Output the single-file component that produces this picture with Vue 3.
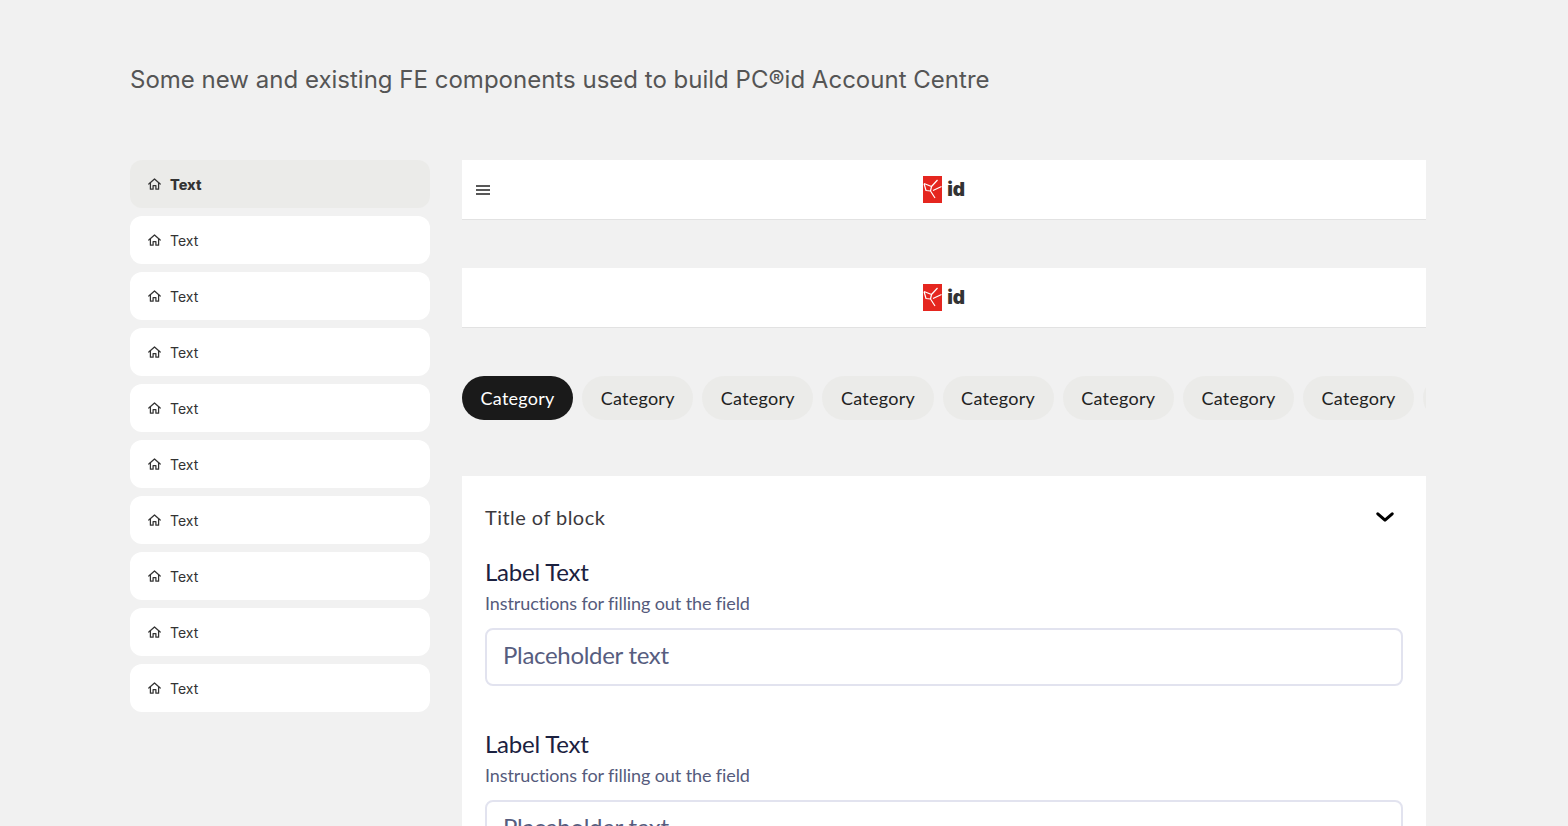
<script setup>
const navItems = Array.from({ length: 10 }, (_, i) => ({ id: i, label: 'Text', active: i === 0 }))
const chips = Array.from({ length: 9 }, (_, i) => ({ id: i, label: 'Category', active: i === 0 }))
const fields = [0, 1]
</script>

<template>
  <main class="page">
    <h1 class="intro">Some new and existing FE components used to build PC®id Account Centre</h1>
    <div class="columns">
      <nav class="side">
        <a v-for="item in navItems" :key="item.id" class="nav-item" :class="{ active: item.active }">
          <svg class="home" viewBox="0 0 13 12" width="13" height="12" fill="none" stroke="currentColor" stroke-width="1.25" stroke-linejoin="round" stroke-linecap="round">
            <path d="M0.8 6 6.5 1 12.2 6" />
            <path d="M2.4 4.8v6.4h2.7V7.6h2.8v3.6h2.7V4.8" />
          </svg>
          <span>{{ item.label }}</span>
        </a>
      </nav>
      <section class="content">
        <header class="topbar">
          <svg class="burger" viewBox="0 0 14 10" width="14" height="10" fill="none" stroke="#222" stroke-width="1.3">
            <path d="M0 1h14M0 5h14M0 9h14" />
          </svg>
          <div class="logo">
            <svg viewBox="0 0 19 27" width="19" height="27">
              <rect width="19" height="27" fill="#e5261f" />
              <path d="M1 7.5 8.5 10.5 14.5 4M8.5 10.5 7.5 15 12 22M7.5 15 3 14.5 1 7.5M10 14.5 18.5 10.5" fill="none" stroke="#fff" stroke-width="1.2" stroke-linejoin="round" />
            </svg>
            <span>id</span>
          </div>
        </header>
        <header class="topbar">
          <div class="logo">
            <svg viewBox="0 0 19 27" width="19" height="27">
              <rect width="19" height="27" fill="#e5261f" />
              <path d="M1 7.5 8.5 10.5 14.5 4M8.5 10.5 7.5 15 12 22M7.5 15 3 14.5 1 7.5M10 14.5 18.5 10.5" fill="none" stroke="#fff" stroke-width="1.2" stroke-linejoin="round" />
            </svg>
            <span>id</span>
          </div>
        </header>
        <div class="chips">
          <button v-for="chip in chips" :key="chip.id" class="chip" :class="{ active: chip.active }">{{ chip.label }}</button>
        </div>
        <article class="block">
          <div class="block-head">
            <h2>Title of block</h2>
            <svg viewBox="0 0 18 10" width="18" height="10" fill="none" stroke="#000" stroke-width="3" stroke-linecap="round" stroke-linejoin="round">
              <path d="M1.8 1.8 9 8.2l7.2-6.4" />
            </svg>
          </div>
          <div v-for="f in fields" :key="f" class="field">
            <label>Label Text</label>
            <p>Instructions for filling out the field</p>
            <div class="input">Placeholder text</div>
          </div>
        </article>
      </section>
    </div>
  </main>
</template>

<style scoped>
.page {
  height: 826px;
  overflow: hidden;
  box-sizing: border-box;
  padding: 64px 142px 0 130px;
  background: #f1f1f1;
  font-family: Inter, "Liberation Sans", sans-serif;
}
.intro {
  margin: 0 0 64px;
  font-size: 24px;
  line-height: 32px;
  font-weight: 400;
  letter-spacing: 0.01px;
  color: #555;
}
.columns {
  display: flex;
  gap: 32px;
  align-items: flex-start;
}
.side {
  width: 300px;
  flex: none;
  display: flex;
  flex-direction: column;
  gap: 8px;
}
.nav-item {
  height: 48px;
  display: flex;
  align-items: center;
  gap: 9.5px;
  padding-left: 18px;
  border-radius: 12px;
  background: #fff;
  color: #333;
  font-size: 14px;
}
.nav-item.active {
  background: #ebebe9;
  font-weight: 800;
  font-size: 14.5px;
}
.home {
  flex: none;
  margin-left: -0.5px;
}
.content {
  flex: 1;
  min-width: 0;
}
.topbar {
  position: relative;
  height: 59px;
  background: #fff;
  border-bottom: 1px solid #e2e2e2;
  margin-bottom: 48px;
  display: flex;
  align-items: center;
  justify-content: center;
}
.burger {
  position: absolute;
  left: 14px;
  top: 25px;
}
.logo {
  display: flex;
  align-items: center;
  gap: 5px;
  font-size: 19px;
  font-weight: 900;
  color: #333;
  letter-spacing: -0.3px;
}
.logo svg {
  display: block;
}
.chips {
  display: flex;
  gap: 9px;
  overflow: hidden;
  margin-bottom: 56px;
}
.chip {
  flex: none;
  width: 111.15px;
  height: 44px;
  border: 0;
  padding: 0;
  border-radius: 22px;
  background: #ebebe9;
  color: #222;
  font-family: Lato, sans-serif;
  font-size: 18px;
  letter-spacing: 0.25px;
}
.chip.active {
  background: #1a1a1a;
  color: #fff;
}
.block {
  background: #fff;
  padding: 23px 23px 0;
  font-family: Lato, sans-serif;
}
.block-head {
  display: flex;
  justify-content: space-between;
  align-items: center;
  height: 36px;
  padding-right: 9px;
  margin-bottom: 23px;
}
.block-head h2 {
  margin: 0;
  font-size: 20px;
  font-weight: 400;
  color: #3c3a3e;
  letter-spacing: 0.45px;
}
.field {
  margin-bottom: 44px;
}
.field label {
  display: block;
  font-size: 24px;
  line-height: 28px;
  letter-spacing: -0.2px;
  color: #1b2140;
}
.field p {
  margin: 5px 0 13px;
  font-size: 18px;
  line-height: 24px;
  letter-spacing: -0.1px;
  color: #555b7c;
}
.input {
  box-sizing: border-box;
  height: 58px;
  border: 2px solid #e2e3ef;
  border-radius: 8px;
  padding: 0 0 6px 16px;
  display: flex;
  align-items: center;
  font-size: 24px;
  letter-spacing: -0.3px;
  color: #575d7f;
}
</style>
